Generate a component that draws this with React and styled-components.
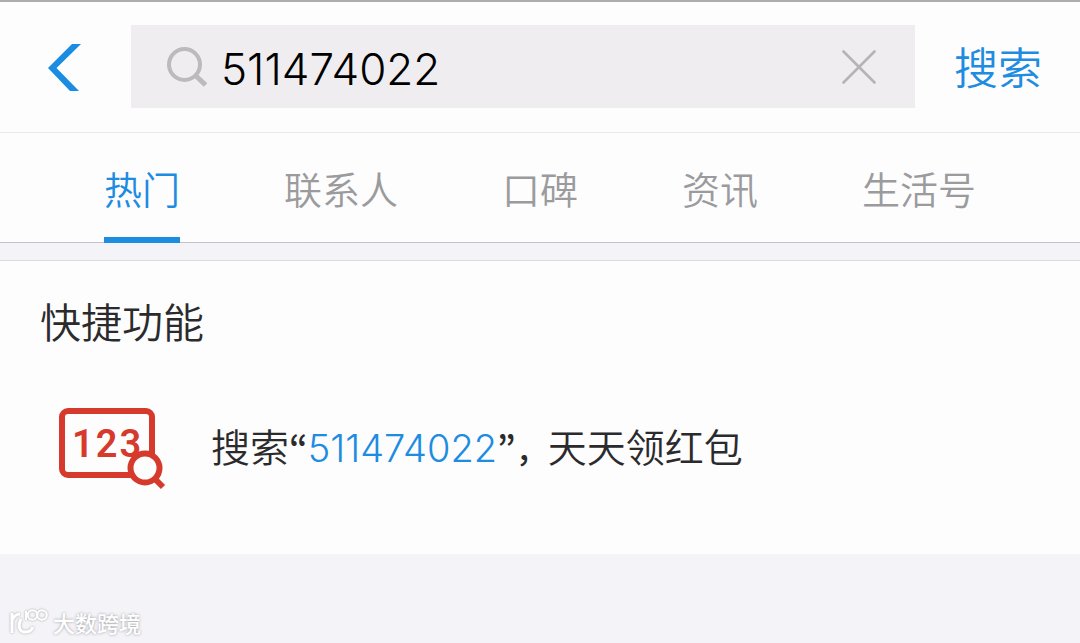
import React, {useState} from 'react'
import styled, {createGlobalStyle} from 'styled-components'

const tabs = ['热门', '联系人', '口碑', '资讯', '生活号']

const App = () => {
    const [keyword, setKeyword] = useState('511474022')
    const [activeTab, setActiveTab] = useState('热门')

    return (
        <Page>
            <GlobalStyle />
            <Header>
                <BackButton aria-label="返回">
                    <svg width="33" height="48" viewBox="0 0 33 48">
                        <path d="M24 1H33L8.500 25L31 48H22L0 25Z" fill="#1a8de2" />
                    </svg>
                </BackButton>
                <SearchBox>
                    <svg width="40" height="40" viewBox="0 0 40 40" fill="none" stroke="#bbbabc">
                        <circle cx="17.500" cy="17.500" r="15.500" strokeWidth="4" />
                        <path d="M28.500 28.500L38.500 38" strokeWidth="5" />
                    </svg>
                    <SearchInput
                        aria-label="搜索内容"
                        value={keyword}
                        onChange={e => setKeyword(e.target.value)}
                    />
                    <ClearButton aria-label="清除" onClick={() => setKeyword('')}>
                        <svg width="34" height="34" viewBox="0 0 34 34">
                            <path d="M1.500 1.500L32.500 32.500M32.500 1.500L1.500 32.500" stroke="#b4b3b5" strokeWidth="2.600" strokeLinecap="round" />
                        </svg>
                    </ClearButton>
                </SearchBox>
                <SearchButton>搜索</SearchButton>
            </Header>

            <Tabs>
                {tabs.map(tab => (
                    <Tab key={tab} $active={tab === activeTab} onClick={() => setActiveTab(tab)}>
                        {tab}
                    </Tab>
                ))}
            </Tabs>

            <Section>
                <SectionTitle>快捷功能</SectionTitle>
                <ResultRow href="#">
                    <NumberSearchIcon />
                    <ResultText>
                        搜索<Quote>“</Quote><Keyword>{keyword}</Keyword><Quote>”</Quote><Comma>，</Comma>天天领红包
                    </ResultText>
                </ResultRow>
            </Section>

            <Footer>
                <svg width="40" height="28" viewBox="0 0 40 28" fill="none" stroke="#fff" strokeWidth="3">
                    <path d="M3 5V25M3 12C5 8 7 6 11 6" />
                    <path d="M12 11C8 19 11 24 16 24C20 24 23 22 24 19" />
                    <path d="M17 3V12" strokeWidth="2" />
                    <circle cx="23.500" cy="7" r="4.800" strokeWidth="2" />
                    <circle cx="33" cy="7" r="4.800" strokeWidth="2" />
                </svg>
                大数跨境
            </Footer>
        </Page>
    )
}

export default App

const NumberSearchIcon = () => (
    <svg width="108" height="84" viewBox="0 0 108 84" fill="none" stroke="#d63a2c">
        <rect x="4" y="5" width="90" height="64" rx="6" strokeWidth="6" />
        <IconDigits x="14" y="51">123</IconDigits>
        <circle cx="87" cy="62" r="14.500" fill="#fdfdfe" strokeWidth="6" />
        <path d="M97 73L105 81" strokeWidth="6" />
    </svg>
)

const GlobalStyle = createGlobalStyle`
    * {
        box-sizing: border-box;
    }
    body {
        margin: 0;
        background: #f4f3f8;
        font-family: "Noto Sans CJK SC", sans-serif;
        font-weight: 350;
    }
    button, input {
        font: inherit;
        border: 0;
        padding: 0;
        background: none;
        outline: none;
    }
    button {
        flex: none;
        cursor: pointer;
    }
    svg {
        display: block;
        flex: none;
    }
`
const Page = styled.div`
    display: flex;
    flex-direction: column;
    min-height: 100vh;
    border-top: 2px solid #adadad;
`
const Header = styled.header`
    display: flex;
    align-items: center;
    padding: 23px 38px 24px 48px;
    background: #fdfdfe;
    border-bottom: 1px solid #ebebed;
`
const BackButton = styled.button`
    margin-right: 50px;
`
const SearchBox = styled.div`
    display: flex;
    flex: 1;
    align-items: center;
    min-width: 0;
    height: 83px;
    padding: 0 39px 0 36px;
    background: #efedf0;
`
const SearchInput = styled.input`
    flex: 1;
    min-width: 0;
    height: 64px;
    margin-left: 14px;
    padding-top: 4px;
    font-family: Inter, "Noto Sans CJK SC", sans-serif;
    font-size: 44px;
    color: #000;
`
const ClearButton = styled.button`
    margin-left: 16px;
`
const SearchButton = styled.button`
    margin-left: 39px;
    padding-bottom: 2px;
    font-size: 44px;
    line-height: 64px;
    color: #1e8ce0;
`
const Tabs = styled.nav`
    display: flex;
    justify-content: space-evenly;
    background: #fdfdfe;
    box-shadow: inset 0 -1px #c4c3cb;
`
const Tab = styled.button`
    height: 110px;
    font-size: 38px;
    line-height: 56px;
    padding-top: 6px;
    color: ${props => props.$active ? "#1e8ce0" : "#9b9b9d"};
    border-bottom: 6px solid ${props => props.$active ? "#1e8ce0" : "transparent"};
`
const Section = styled.section`
    margin-top: 17px;
    padding: 29px 40px 64px;
    background: #fdfdfe;
    border-top: 1px solid #dcdce0;
`
const SectionTitle = styled.h2`
    margin: 0;
    font-size: 41px;
    font-weight: 350;
    line-height: 60px;
    color: #2b2b2d;
`
const ResultRow = styled.a`
    display: flex;
    align-items: center;
    margin-top: 56px;
    padding-left: 18px;
    color: #2b2b2d;
    text-decoration: none;
`
const ResultText = styled.span`
    margin-left: 45px;
    padding-bottom: 4px;
    font-size: 39px;
    line-height: 60px;
`
const Keyword = styled.span`
    font-family: Inter, "Noto Sans CJK SC", sans-serif;
    font-size: 38px;
    color: #1e8ce0;
`
const Quote = styled.span`
    font-family: "Noto Sans CJK KR", sans-serif;
    font-size: 36px;
    font-weight: 500;
`
const Comma = styled.span`
    font-size: 32px;
    font-weight: 500;
`
const IconDigits = styled.text`
    font-family: Roboto, sans-serif;
    font-size: 38px;
    font-weight: 600;
    letter-spacing: 2px;
    fill: #d63a2c;
    stroke: none;
`
const Footer = styled.footer`
    display: flex;
    align-items: center;
    gap: 4px;
    margin-top: auto;
    padding: 0 9px 5px;
    font-size: 22px;
    font-weight: 500;
    line-height: 32px;
    color: #fff;
    text-shadow: 0 0 3px #98979b;

    svg {
        filter: drop-shadow(0 0 1px #a5a4a8);
    }
`
